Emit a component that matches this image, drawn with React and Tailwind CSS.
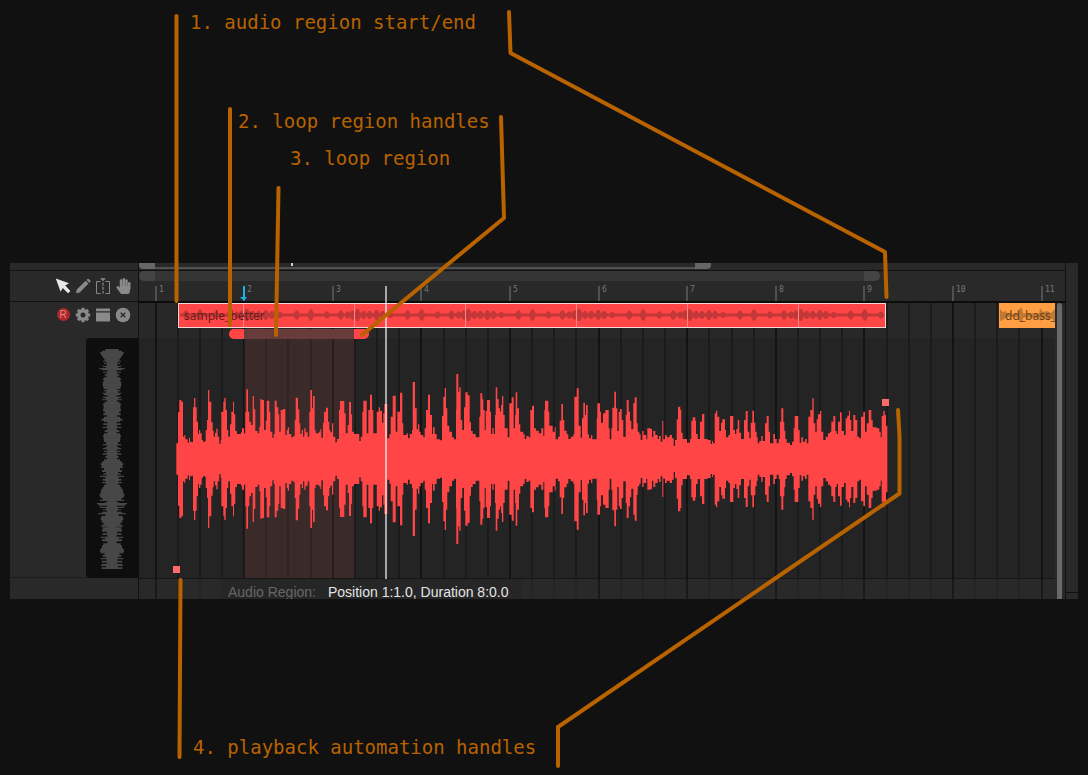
import React from "react";

const MEASURE = 88.6;
const ORIGIN = 16.6;

/* Envelope samples: [position, top edge] in thirds of a pixel, mirrored around 297. */
const CLIP_A = "19:250,24:157,28:120,34:125,39:230,43:225,46:238,53:248,57:233,60:245,65:247,69:142,72:114,76:142,80:185,84:222,87:210,91:220,95:240,99:246,104:243,107:210,111:180,114:90,118:125,124:187,128:212,131:230,135:218,139:206,143:230,148:251,152:240,154:155,160:125,163:114,167:150,171:210,175:230,180:193,184:155,189:125,192:163,196:213,201:222,213:217,216:205,222:220,226:155,229:88,234:155,238:185,243:195,248:108,252:148,256:213,263:220,268:200,271:117,275:120,282:210,287:182,290:122,298:155,301:215,307:233,311:222,314:122,320:142,325:163,328:215,332:150,339:147,346:225,350:210,353:202,357:222,364:232,370:228,374:180,377:113,384:148,388:190,391:222,395:210,399:230,403:205,407:217,413:230,418:155,421:90,426:145,429:108,434:210,437:220,447:215,451:207,454:233,459:188,462:155,468:143,474:185,478:210,481:217,486:190,490:230,496:247,501:237,507:150,510:123,523:160,527:220,533:195,537:126,543:163,546:215,552:222,568:243,572:230,577:155,580:122,590:220,595:150,600:104,606:150,610:220,620:155,626:142,630:152,636:188,640:160,643:132,652:235,658:223,662:170,668:107,677:215,682:155,690:98,697:190,700:225,710:220";
const CLIP_B = "24:235,29:222,36:210,38:66,45:145,50:208,54:193,58:215,62:225,70:232,74:205,78:150,84:104,90:165,96:222,99:202,104:222,110:238,120:241,126:168,130:110,134:84,138:145,142:197,148:215,156:232,162:238,168:150,169:42,175:95,178:82,182:180,187:210,192:142,196:97,203:106,209:187,213:213,218:222,227:232,238:170,241:100,247:118,250:150,254:210,257:153,261:120,270:155,273:222,277:205,281:222,285:165,287:82,292:118,296:145,300:155,303:135,306:108,310:165,314:205,323:232,328:130,335:112,341:205,345:165,347:97,352:145,357:193,361:215,370:223,374:237,379:228,386:232,391:150,396:137,402:205,408:212,416:220,424:205,430:228,433:150,435:122,445:155,448:197,458:215,464:202,467:238,474:230,479:182,484:132,489:180,493:212,500:223,505:237,512:230,520:223,523:110,530:85,536:197,542:233,546:175,550:128,555:165,558:135,563:223,567:235,573:225,577:238,590:175,592:130,600:155,603:188,609:160,616:150,626:205,629:238,634:205,637:143,643:95,648:145,652:213,656:155,660:147,665:180,670:230,677:165,680:120,686:155,690:182,694:208,700:130,704:112,710:190,713:215,718:223,722:240,727:213,731:225,739:238,742:205";
const CLIP_C = "32:207,36:232,40:213,46:225,53:237,57:228,62:245,67:183,70:238,75:225,80:232,89:225,96:235,101:258,105:240,110:178,114:140,121:150,124:218,128:237,141:248,150:237,154:182,158:172,166:182,168:222,173:237,180:185,186:162,193:237,203:240,212:252,216:243,219:250,224:160,228:152,232:170,238:213,243:188,247:178,255:210,258:232,265:225,270:168,280:210,285:222,289:207,293:180,298:218,303:237,312:180,317:153,323:215,328:235,332:188,337:152,342:188,346:215,350:232,353:250,358:243,364:228,368:243,375:190,380:168,386:215,390:250,400:222,405:237,410:250,416:237,420:185,424:145,430:185,433:212,436:237,440:248,450:255,456:245,461:205,464:168,475:210,479:248,484:232,489:245,495:237,500:250,505:170,511:150,517:115,521:190,526:215,530:178,534:163,540:153,544:215,550:240,557:230,564:220,570:215,574:185,580:168,586:213,590:222,594:185,600:157,605:213,612:225,617:175,622:167,627:152,630:180,634:213,640:165,646:180,652:230,658:235,663:170,670:155,675:215,680:190,686:150,694:180,698:202,710:205,718:215,722:232,725:168,730:153,734:165,738:197";
const OVERVIEW = "57:20,62:30,66:35,72:32,78:28,84:24,88:22,92:27,95:15,98:24,102:16,107:28,111:18,114:38,118:30,121:14,125:27,128:16,132:22,137:15,140:22,144:26,150:25,155:28,165:27,172:25,177:16,180:25,184:18,188:28,192:24,196:14,200:27,204:20,208:30,211:15,215:22,220:26,228:25,236:27,244:22,250:26,256:16,260:24,265:28,268:32,272:24,276:14,280:26,285:15,290:28,294:14,300:22,306:14,310:24,316:27,322:25,330:24,336:18,342:27,346:15,350:20,354:27,358:14,362:24,366:16,370:28,374:15,378:20,384:15,388:24,394:30,400:34,406:30,410:34,414:24,420:30,426:18,430:26,434:16,437:36,441:20,446:28,452:20,456:30,460:18,464:24,470:28,476:32,484:34,490:37,500:34,505:28,509:36,513:14,516:20,519:45,523:40,527:15,530:37,534:18,538:28,541:16,545:30,549:41,553:20,558:32,564:34,570:31,578:25,584:32,590:14,592:28,600:30,605:15,610:28,615:14,620:34,624:20,628:30,634:14,640:26,646:30,654:34,660:36,666:34,670:22,674:28,680:18,684:34,688:16,692:30,698:16,702:32,708:18,712:31";

const parse = (s) => s.split(",").map((p) => p.split(":").map(Number));

const samples = [
  ...parse(CLIP_A).map(([x, y]) => [31 + x / 3, (297 - y) / 3]),
  ...parse(CLIP_B).map(([x, y]) => [261 + x / 3, (297 - y) / 3]),
  ...parse(CLIP_C).map(([x, y]) => [501 + x / 3, (297 - y) / 3]),
];
const overview = parse(OVERVIEW).map(([y, w]) => [y / 3 - 8, w / 3]);

function mirrored(points, end, mid, vertical) {
  const top = [];
  const bottom = [];
  points.forEach(([p, a], i) => {
    const next = i + 1 < points.length ? points[i + 1][0] : end;
    top.push([p, mid - a], [next, mid - a]);
    bottom.push([p, mid + a], [next, mid + a]);
  });
  const all = [...top, ...bottom.reverse()];
  return "M" + all.map(([p, q]) => (vertical ? [q, p] : [p, q]).map((n) => n.toFixed(1)).join(" ")).join("L") + "Z";
}

const WAVE = mirrored(samples, 748.4, 120, false);
const OVERVIEW_PATH = mirrored(overview, 231, 26, true);

const BLOBS = [[3, 6], [9, 4], [15, 4], [22, 5], [28, 4], [36, 3], [53, 4.5], [67, 5.5], [83, 3.5], [97, 4.5], [104, 3.5], [109, 4.5]];

function miniPath(start, end, phase) {
  let d = `M${start} 10.5H${end}V13.5H${start}Z`;
  for (let base = phase; base < end; base += 110.8) {
    BLOBS.forEach(([o, h]) => {
      const x = base + o;
      if (x - 3 > start && x + 3 < end) d += `M${x - 4} 12L${x - 1} ${12 - h}H${x + 1}L${x + 4} 12L${x + 1} ${12 + h}H${x - 1}Z`;
    });
  }
  return d;
}

const quarters = Array.from({ length: 120 }, (_, i) => i);
const measures = Array.from({ length: 11 }, (_, i) => i);

function GridLines({ height, faint }) {
  return (
    <svg className="absolute inset-0" width="2660" height={height} aria-hidden="true">
      {quarters.map((i) => (
        <rect
          key={i}
          x={Math.round(ORIGIN + (i * MEASURE) / 4) - 1}
          y="0"
          width="2"
          height={height}
          fill={i % 4 ? (faint ? "#252525" : "#1b1b1b") : faint ? "#191919" : "#131313"}
        />
      ))}
    </svg>
  );
}

function IconButton({ label, className = "text-[#8a8a8a]", children }) {
  return (
    <button type="button" aria-label={label} className={`flex h-4 w-4 items-center justify-center ${className}`}>
      {children}
    </button>
  );
}

const Svg = ({ children }) => (
  <svg viewBox="0 0 16 16" width="16" height="16" fill="currentColor" aria-hidden="true">
    {children}
  </svg>
);

function Tools() {
  return (
    <div className="flex h-[30px] items-center justify-end gap-1 pr-[7px]">
      <IconButton label="Select" className="text-[#e8e8e8]">
        <Svg><path d="M.8 .6L14 5.200L10.200 7.500L15.400 13L13 15.300L7.800 9.900L5.600 13.800Z" /></Svg>
      </IconButton>
      <IconButton label="Draw">
        <Svg><path d="M1 15.2L1.800 11.500L10.600 2.700L13.500 5.600L4.700 14.400ZM11.400 1.900L12.500.9Q13 .4 13.700.9L15.300 2.500Q15.800 3.200 15.300 3.900L14.300 4.800Z" /></Svg>
      </IconButton>
      <IconButton label="Split">
        <Svg>
          <path d="M5 .3H11L8 3.300Z" />
          <path d="M8 4.500V15.500" stroke="currentColor" strokeWidth="1.200" strokeDasharray="3 1.200" />
          <path d="M5.500 3.500H1.500V15.500H5.500M10.500 3.500H14.500V15.500H10.500" fill="none" stroke="currentColor" />
        </Svg>
      </IconButton>
      <IconButton label="Pan">
        <svg viewBox="0 0 448 512" width="15" height="16" fill="currentColor" aria-hidden="true">
          <path d="M408.781 128.007C386.356 127.578 368 146.360 368 168.790V256h-8V79.790c0-22.430-18.356-41.212-40.781-40.783C297.488 39.423 280 57.169 280 79v177h-8V40.790C272 18.360 253.644-.422 231.219.007 209.488.423 192 18.169 192 40v216h-8V80.790c0-22.430-18.356-41.212-40.781-40.783C121.488 40.423 104 58.169 104 80v235.992l-31.648-43.519c-12.993-17.866-38.009-21.817-55.877-8.823-17.865 12.994-21.815 38.010-8.822 55.877l125.601 172.705A48 48 0 0 0 172.073 512h197.590c22.274 0 41.622-15.324 46.724-37.006l26.508-112.660a192.011 192.011 0 0 0 5.104-43.975V168c.001-21.831-17.487-39.577-39.218-39.993z" />
        </svg>
      </IconButton>
    </div>
  );
}

function TrackButtons() {
  return (
    <div className="flex h-[25px] items-center justify-end gap-1 pr-[7px]">
      <IconButton label="Record">
        <span className="flex h-[13px] w-[13px] shrink-0 items-center justify-center rounded-full bg-[#ae272c] font-['Liberation_Sans'] text-[10px] leading-none text-[#dd8a8a]">R</span>
      </IconButton>
      <IconButton label="Track settings">
        <svg viewBox="0 0 16 16" width="16" height="16" aria-hidden="true">
          <circle cx="8" cy="8" r="4.200" fill="none" stroke="currentColor" strokeWidth="3.400" />
          <path d="M8 .8V3M8 13V15.200M.8 8H3M13 8H15.200M2.900 2.900L4.500 4.500M11.500 11.500L13.100 13.100M2.900 13.100L4.500 11.500M11.500 4.500L13.100 2.900" stroke="currentColor" strokeWidth="3" />
        </svg>
      </IconButton>
      <IconButton label="Track view">
        <Svg><path d="M1 1.500H15V4.300H1ZM1 5.500H15V14.500H1Z" /></Svg>
      </IconButton>
      <IconButton label="Remove track">
        <Svg>
          <circle cx="8" cy="8" r="7.300" />
          <path d="M5.700 5.700L10.300 10.300M10.300 5.700L5.700 10.300" stroke="#292929" strokeWidth="1.300" />
        </Svg>
      </IconButton>
    </div>
  );
}

function Sidebar() {
  return (
    <aside className="flex w-[129px] shrink-0 flex-col border-r border-[#111]">
      <div className="h-2 border-b border-[#111]" />
      <Tools />
      <div className="h-px bg-[#111]" />
      <TrackButtons />
      <div className="mt-[11px] flex h-60 justify-end border-b border-[#1c1c1c]">
        <div className="h-60 w-[52px] rounded-l bg-[#0e0e0e]">
          <svg width="52" height="240" aria-hidden="true"><path d={OVERVIEW_PATH} fill="#474747" /></svg>
        </div>
      </div>
    </aside>
  );
}

function Ruler() {
  return (
    <div className="relative h-[30px] overflow-hidden">
      <div className="flex h-[10px] w-[741px] justify-between overflow-hidden rounded-full bg-[#353535]">
        <div className="w-4 bg-[#444]" />
        <div className="w-4 bg-[#444]" />
      </div>
      {measures.map((i) => (
        <span
          key={i}
          className="absolute top-[15px] h-[15px] border-l-2 border-[#505050] pl-[2px] font-['DejaVu_Sans_Mono'] text-[8px] leading-[8px] text-[#777]"
          style={{ left: Math.round(ORIGIN + i * MEASURE) - 1 }}
        >
          {i + 1}
        </span>
      ))}
      <svg className="absolute left-[100px] top-[15px]" width="9" height="15" aria-hidden="true">
        <path d="M4 0H6V11H8L5 15L1 11H4Z" fill="#1cb2e6" />
      </svg>
    </div>
  );
}

function ArrangeLane() {
  return (
    <div className="relative h-[26px] overflow-hidden bg-[#282828]">
      <GridLines height="26" />
      <button type="button" className="absolute left-[39px] top-0 h-[25px] w-[708px] overflow-hidden border border-[#f6d5d5] bg-[#ff4545] text-left">
        <svg className="absolute inset-0" width="708" height="23" aria-hidden="true">
          <path d={miniPath(1, 705, -46)} fill="#c23737" transform="translate(0 -1)" />
          {[64, 175, 286, 397, 508, 619].map((x) => <rect key={x} x={x} y="0" width="1" height="23" fill="#ff8585" />)}
        </svg>
        <span className="relative block pl-[5px] font-['Noto_Sans'] text-[12px] leading-6 text-[#691c1c]">sample_better</span>
      </button>
      <button type="button" className="absolute left-[860px] top-0 h-[25px] w-[56px] overflow-hidden bg-[#ff9e42] text-left">
        <svg className="absolute inset-0" width="56" height="25" aria-hidden="true">
          <path d="M1 6L4 9L7 8L8 11H19L21 5L23 5L24 10L29 11L36 10L40 11L41 5L44 9L48 8L52 10L56 6V19L52 15L48 17L44 15L41 18L40 14L36 15L29 14L24 15L23 19H21L19 14H8L4 17L1 18Z" fill="#c27831" />
        </svg>
        <span className="relative block whitespace-nowrap pl-[6px] font-['Noto_Sans'] text-[12px] leading-6 text-[#6b421c]">dd_bass_</span>
      </button>
    </div>
  );
}

function Editor() {
  return (
    <div className="relative overflow-hidden bg-[#242424]">
      <div className="h-[9px] bg-[#282828]" />
      <div className="h-60" />
      <GridLines height="249" />
      <div className="absolute left-[105px] top-[9px] h-60 w-[110px] bg-[#ff6060]/10" />
      <div className="absolute left-[90px] top-0 flex h-[10px] w-[140px] justify-between overflow-hidden rounded-full bg-[#693c3c]">
        <button type="button" aria-label="Loop start" className="w-[15px] bg-[#ff4545]" />
        <button type="button" aria-label="Loop end" className="w-[15px] bg-[#ff4545]" />
      </div>
      <svg className="absolute left-0 top-[10px]" width="916" height="239" role="img" aria-label="Waveform">
        <path d={WAVE} fill="#ff4545" />
      </svg>
      <button type="button" aria-label="Automation start" className="absolute left-[34px] top-[237px] h-[7px] w-[7px] bg-[#ff6b6b]" />
      <button type="button" aria-label="Automation end" className="absolute left-[743px] top-[70px] h-[7px] w-[7px] bg-[#ff6b6b]" />
    </div>
  );
}

function Timeline() {
  return (
    <main className="relative min-w-0 flex-1">
      <div className="relative h-2 border-b border-[#111]">
        <div className="absolute left-1 top-[4px] h-[2px] w-[564px] bg-[#505050]" />
        <div className="relative flex h-[6px] w-[572px] justify-between">
          <div className="w-4 rounded-bl bg-[#666]" />
          <div className="w-4 rounded-br bg-[#666]" />
        </div>
        <div className="absolute left-[152px] top-0 h-[3px] w-[2px] bg-[#ccc]" />
      </div>
      <Ruler />
      <div className="h-[2px] bg-[#0c0c0c]" />
      <div className="flex">
        <div className="min-w-0 flex-1">
          <ArrangeLane />
          <Editor />
          <footer className="relative flex h-[21px] overflow-hidden border-t border-[#151515]">
            <GridLines height="21" faint />
            <p className="relative ml-[83px] flex h-6 w-[300px] shrink-0 gap-[12px] bg-[#262626] pl-[6px] pt-[3px] font-['Liberation_Sans'] text-[14px] leading-5 text-[#e4e4e4]">
              <span className="text-[#666]">Audio Region:</span>
              <span className="whitespace-nowrap">Position 1:1.0, Duration 8:0.0</span>
            </p>
          </footer>
        </div>
        <div className="w-[10px] shrink-0 pl-[2px]">
          <div className="h-full w-[5px] rounded-t-full bg-[#696969]" />
        </div>
      </div>
      <div className="absolute left-[246px] top-[23px] h-[293px] w-[2px] bg-white/60" />
    </main>
  );
}

const note = "absolute whitespace-nowrap font-['DejaVu_Sans_Mono'] text-[19px] leading-6 text-[#b86200]";

function Annotations() {
  return (
    <div className="pointer-events-none absolute inset-0">
      <svg className="absolute inset-0 h-full w-full" fill="none" stroke="#b86200" strokeWidth="4" strokeLinecap="round" strokeLinejoin="round" aria-hidden="true">
        <path d="M176.500 16V301" />
        <path d="M509 12L510.500 53L885 252L886.500 297" />
        <path d="M230 109V325" />
        <path d="M501 117L504 218L362 335" />
        <path d="M278.500 188L276 335" />
        <path d="M180.500 580L179.500 757" />
        <path d="M898 410L899.500 436V493.500L558 727V766" />
      </svg>
      <p className={`${note} left-[190px] top-[10px]`}>1. audio region start/end</p>
      <p className={`${note} left-[238px] top-[109px]`}>2. loop region handles</p>
      <p className={`${note} left-[290px] top-[146px]`}>3. loop region</p>
      <p className={`${note} left-[193px] top-[735px]`}>4. playback automation handles</p>
    </div>
  );
}

export default function App() {
  return (
    <div className="relative min-h-screen bg-[#111] px-[10px] pt-[263px]">
      <div className="flex bg-[#292929]">
        <Sidebar />
        <Timeline />
        <div className="flex w-[13px] shrink-0 flex-col justify-end border-l border-[#111]">
          <div className="h-[7px] border-t border-[#111]" />
        </div>
      </div>
      <Annotations />
    </div>
  );
}
